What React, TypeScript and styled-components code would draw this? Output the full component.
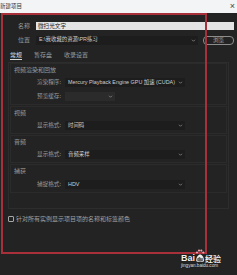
import React from 'react';
import styled, { createGlobalStyle } from 'styled-components';

const GlobalStyle = createGlobalStyle`
  html, body {
    margin: 0;
    padding: 0;
    background: #232323;
  }
  body {
    font-family: "Noto Sans CJK SC", "Liberation Sans", sans-serif;
  }
`;

const Window = styled.div`
  position: relative;
  width: 237px;
  height: 275px;
  overflow: hidden;
  background: #232323;
`;

const TitleBar = styled.div`
  height: 13px;
  background: #f3f4f5;
  display: flex;
  align-items: center;
  justify-content: space-between;
  padding: 0 2px 0 0;
  font-size: 5.5px;
  color: #333;
  line-height: 1;
`;

const Close = styled.span`
  font-family: "Liberation Sans", sans-serif;
  font-size: 9px;
  color: #444;
`;

const Body = styled.div`
  padding: 9px 3px 0 0;
`;

const FieldRow = styled.div<{ $top?: number }>`
  display: flex;
  align-items: center;
  height: 8px;
  margin-top: ${p => p.$top ?? 0}px;
  padding-left: 18px;
  gap: 6px;
`;

const FieldLabel = styled.span`
  font-size: 6px;
  color: #9a9a9a;
  white-space: nowrap;
  line-height: 1;
`;

const NameInput = styled.div`
  flex: 1;
  height: 8px;
  background: #e4e4e4;
  display: flex;
  align-items: center;
  padding-left: 2px;
  font-size: 5.6px;
  color: #222;
`;

const Select = styled.div<{ $w?: number; $disabled?: boolean; $flex?: boolean }>`
  ${p => (p.$flex ? 'flex: 1;' : `width: ${p.$w ?? 120}px;`)}
  height: 9px;
  box-sizing: border-box;
  background: ${p => (p.$disabled ? '#2b2b2b' : '#1d1d1d')};
  display: flex;
  align-items: center;
  justify-content: space-between;
  padding: 0 2px 0 3px;
  font-family: "Liberation Sans", "Noto Sans CJK SC", sans-serif;
  font-size: 5.4px;
  color: #cfcfcf;
  white-space: nowrap;
  line-height: 1;
`;

const Chevron = styled.svg`
  width: 5px;
  height: 5px;
  flex: none;
`;

const Button = styled.div`
  width: 31px;
  height: 9px;
  box-sizing: border-box;
  border: 1px solid #8c8c8c;
  border-radius: 4px;
  display: flex;
  align-items: center;
  justify-content: center;
  font-size: 5.6px;
  color: #a8a8a8;
  margin-left: -1px;
`;

const Tabs = styled.div`
  display: flex;
  gap: 12px;
  margin-top: 7px;
  padding-left: 10px;
  height: 10px;
`;

const Tab = styled.span<{ $active?: boolean }>`
  font-size: 6px;
  line-height: 8px;
  color: ${p => (p.$active ? '#dcdcdc' : '#9a9a9a')};
  border-bottom: 1px solid ${p => (p.$active ? '#d8d8d8' : 'transparent')};
  height: 8px;
`;

const Panel = styled.div`
  margin: 1px 5px 0 8px;
  border: 1px solid #2d2d2d;
  padding: 0 1px 15px;
`;

const Section = styled.div`
  border: 1px solid #2b2b2b;
  padding: 2px 0 3px;
  & + & {
    margin-top: 1px;
  }
`;

const Heading = styled.div`
  font-size: 6px;
  line-height: 8px;
  color: #9a9a9a;
  padding-left: 3px;
`;

const OptionRow = styled.div<{ $gap?: number }>`
  display: grid;
  grid-template-columns: 50px auto;
  align-items: center;
  column-gap: 4px;
  margin-top: ${p => p.$gap ?? 4}px;
`;

const OptionLabel = styled.span`
  font-size: 5.6px;
  color: #9a9a9a;
  text-align: right;
  line-height: 1;
`;

const CheckRow = styled.div`
  display: flex;
  align-items: center;
  gap: 2px;
  margin-top: 6px;
  padding-left: 8px;
  height: 8px;
`;

const CheckBox = styled.span`
  width: 6px;
  height: 6px;
  box-sizing: border-box;
  border: 1px solid #a6a6a6;
  border-radius: 1px;
`;

const CheckText = styled.span`
  font-size: 6px;
  color: #a0a0a0;
  line-height: 1;
`;

const Annotation = styled.div`
  position: absolute;
  left: 1px;
  top: 13px;
  width: 206px;
  height: 241px;
  box-sizing: border-box;
  border: 2px solid #a8303a;
  pointer-events: none;
`;

const Watermark = styled.div`
  position: absolute;
  left: 181px;
  top: 248px;
  display: flex;
  flex-direction: column;
  align-items: flex-start;
  color: #f2f2f2;
  text-shadow: 0 0 1px #000;
`;

const MarkLine = styled.div`
  display: flex;
  align-items: flex-end;
  height: 15px;
`;

const MarkBai = styled.span`
  font-family: "Liberation Sans", sans-serif;
  font-weight: bold;
  font-size: 9px;
  line-height: 9px;
`;

const MarkJy = styled.span`
  font-size: 8px;
  line-height: 9px;
  font-weight: bold;
`;

const MarkUrl = styled.span`
  font-family: "Liberation Sans", sans-serif;
  font-size: 4.6px;
  line-height: 6px;
  color: #e0e0e0;
`;

const ChevronIcon = () => (
  <Chevron viewBox="0 0 10 10">
    <path d="M2 3.5 L5 6.5 L8 3.5" fill="none" stroke="#9a9a9a" strokeWidth="1.4" />
  </Chevron>
);

const Paw = () => (
  <svg width="10" height="15" viewBox="0 0 10 15">
    <circle cx="2" cy="4.5" r="1.1" fill="#f2a0b0" />
    <circle cx="4" cy="2.6" r="1.1" fill="#f2a0b0" />
    <circle cx="6.3" cy="2.6" r="1.1" fill="#f2a0b0" />
    <circle cx="8.3" cy="4.5" r="1.1" fill="#f2a0b0" />
    <path d="M1.2 12.5 C1.2 9 3.5 6.5 5.1 6.5 C6.8 6.5 9 9 9 12.5 C9 14 7 14 5.1 13.4 C3.2 14 1.2 14 1.2 12.5 Z" fill="#f2f2f2" />
    <text x="5.1" y="12.5" fontSize="4.6" fontFamily="Liberation Sans, sans-serif" fontWeight="bold" textAnchor="middle" fill="#555">du</text>
  </svg>
);

type Opt = { label: string; value: string; w?: number; disabled?: boolean; gap?: number };

const sections: { title: string; rows: Opt[] }[] = [
  {
    title: '视频渲染和回放',
    rows: [
      { label: '渲染程序:', value: 'Mercury Playback Engine GPU 加速 (CUDA)' },
      { label: '预览缓存:', value: '', w: 50, disabled: true, gap: 5 },
    ],
  },
  { title: '视频', rows: [{ label: '显示格式:', value: '时间码' }] },
  { title: '音频', rows: [{ label: '显示格式:', value: '音频采样' }] },
  { title: '捕获', rows: [{ label: '捕捉格式:', value: 'HDV', gap: 5 }] },
];

export default function App() {
  return (
    <Window>
      <GlobalStyle />
      <TitleBar>
        <span>新建项目</span>
        <Close>×</Close>
      </TitleBar>
      <Body>
        <FieldRow>
          <FieldLabel>名称</FieldLabel>
          <NameInput>微扫光文字</NameInput>
        </FieldRow>
        <FieldRow $top={6}>
          <FieldLabel>位置</FieldLabel>
          <Select $flex>
            <span>E:\我收藏的资源\PR练习</span>
            <ChevronIcon />
          </Select>
          <Button>浏览</Button>
        </FieldRow>
        <Tabs>
          <Tab $active>常规</Tab>
          <Tab>暂存盘</Tab>
          <Tab>收录设置</Tab>
        </Tabs>
        <Panel>
          {sections.map(s => (
            <Section key={s.title}>
              <Heading>{s.title}</Heading>
              {s.rows.map(r => (
                <OptionRow key={r.label} $gap={r.gap}>
                  <OptionLabel>{r.label}</OptionLabel>
                  <Select $w={r.w} $disabled={r.disabled}>
                    <span>{r.value}</span>
                    <ChevronIcon />
                  </Select>
                </OptionRow>
              ))}
            </Section>
          ))}
        </Panel>
        <CheckRow>
          <CheckBox />
          <CheckText>针对所有实例显示项目项的名称和标签颜色</CheckText>
        </CheckRow>
      </Body>
      <Annotation />
      <Watermark>
        <MarkLine>
          <MarkBai>Bai</MarkBai>
          <Paw />
          <MarkJy>经验</MarkJy>
        </MarkLine>
        <MarkUrl>jingyan.baidu.com</MarkUrl>
      </Watermark>
    </Window>
  );
}
